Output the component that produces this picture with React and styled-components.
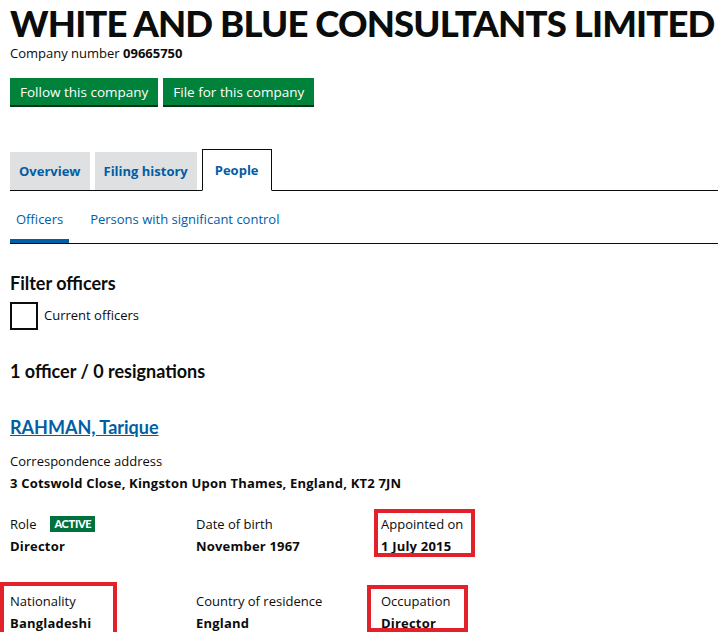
import React from "react";
import styled, { createGlobalStyle } from "styled-components";

const GlobalStyle = createGlobalStyle`
  body {
    margin: 0;
    background: #ffffff;
    font-family: "Open Sans", Arial, sans-serif;
    color: #0b0c0c;
  }
`;

const Page = styled.div`
  padding: 0 0 0 10px;
  width: 708px;
`;

const Title = styled.h1`
  margin: 0;
  padding-top: 3px;
  font-family: "Lato", Arial, sans-serif;
  font-size: 36.5px;
  line-height: 40px;
  font-weight: 900;
  white-space: nowrap;
  letter-spacing: -0.85px;
`;

const CompanyNumber = styled.p`
  margin: 2px 0 0;
  font-size: 13px;
  line-height: 16px;

  strong {
    font-weight: 700;
  }
`;

const ButtonRow = styled.div`
  display: flex;
  gap: 5px;
  margin-top: 17px;
`;

const GreenButton = styled.button`
  background: #00823b;
  color: #ffffff;
  border: none;
  box-shadow: 0 2px 0 #003618;
  font-family: inherit;
  font-size: 13.5px;
  height: 27px;
  padding: 0 10px;
  cursor: pointer;
`;

const Tabs = styled.ul`
  list-style: none;
  display: flex;
  gap: 5px;
  margin: 44px 0 0;
  padding: 0;
  border-bottom: 1px solid #0b0c0c;
  height: 41px;
  align-items: flex-end;
`;

const Tab = styled.li`
  height: ${props => (props.$active ? "42px" : "38px")};
  margin-bottom: ${props => (props.$active ? "-1px" : "0")};
  box-sizing: border-box;
  display: flex;
  align-items: center;
  padding: 0 ${props => (props.$active ? "12px" : "9px")};
  background: ${props => (props.$active ? "#ffffff" : "#dee0e2")};
  border: ${props => (props.$active ? "1px solid #0b0c0c" : "none")};
  border-bottom: ${props => (props.$active ? "1px solid #ffffff" : "none")};
  color: #005ea5;
  font-weight: 700;
  font-size: 13px;
`;

const SubTabs = styled.div`
  display: flex;
  gap: 15px;
  border-bottom: 1px solid #0b0c0c;
  margin-top: 19px;
`;

const SubTab = styled.span`
  font-size: 13px;
  color: #005ea5;
  padding: 0 6px 11px;
  border-bottom: 4px solid ${props => (props.$active ? "#005ea5" : "transparent")};
`;

const SectionHeading = styled.h2`
  margin: ${props => props.$top || "0"} 0 0;
  font-family: "Lato", Arial, sans-serif;
  font-size: 18px;
  line-height: 22px;
  font-weight: 700;
`;

const CheckRow = styled.label`
  display: flex;
  align-items: flex-start;
  gap: 6px;
  margin-top: 8px;
  font-size: 13px;
`;

const CheckBox = styled.span`
  width: 28px;
  height: 28px;
  box-sizing: border-box;
  border: 2px solid #0b0c0c;
  background: #ffffff;
`;

const CheckText = styled.span`
  padding-top: 4px;
`;

const OfficerLink = styled.a`
  display: inline-block;
  margin-top: 34px;
  font-family: "Lato", Arial, sans-serif;
  font-size: 18px;
  font-weight: 700;
  color: #005ea5;
  text-decoration: underline;
`;

const Label = styled.div`
  font-size: 13px;
  line-height: 18px;
`;

const Value = styled.div`
  font-size: 13px;
  line-height: 18px;
  font-weight: 700;
  letter-spacing: 0.2px;
  margin-top: 4px;
`;

const Address = styled.div`
  margin-top: 13px;
`;

const DetailGrid = styled.div`
  display: grid;
  grid-template-columns: 186px 185px 186px;
  row-gap: 37px;
  margin-top: 23px;
`;

const Detail = styled.div`
  position: relative;

  &::after {
    content: "";
    display: ${props => (props.$box ? "block" : "none")};
    position: absolute;
    left: ${props => (props.$box ? props.$box[0] : 0)}px;
    top: ${props => (props.$box ? props.$box[1] : 0)}px;
    width: ${props => (props.$box ? props.$box[2] : 0)}px;
    height: ${props => (props.$box ? props.$box[3] : 0)}px;
    border: 4px solid #e3212b;
    box-sizing: border-box;
    pointer-events: none;
  }
`;

const Tag = styled.span`
  display: inline-block;
  margin-left: 14px;
  background: #00703c;
  color: #ffffff;
  font-family: "Lato", Arial, sans-serif;
  font-size: 11px;
  font-weight: 900;
  letter-spacing: -0.3px;
  line-height: 16px;
  padding: 0 4px;
  vertical-align: 1px;
`;

const details = [
  { label: "Role", value: "Director", tag: "ACTIVE" },
  { label: "Date of birth", value: "November 1967" },
  { label: "Appointed on", value: "1 July 2015", box: [-7, -6, 101, 48] },
  { label: "Nationality", value: "Bangladeshi", box: [-10, -10, 117, 60] },
  { label: "Country of residence", value: "England" },
  { label: "Occupation", value: "Director", box: [-14, -7, 101, 47] },
];

export default function App() {
  return (
    <Page>
      <GlobalStyle />
      <Title>WHITE AND BLUE CONSULTANTS LIMITED</Title>
      <CompanyNumber>
        Company number <strong>09665750</strong>
      </CompanyNumber>
      <ButtonRow>
        <GreenButton>Follow this company</GreenButton>
        <GreenButton>File for this company</GreenButton>
      </ButtonRow>

      <Tabs>
        <Tab>Overview</Tab>
        <Tab>Filing history</Tab>
        <Tab $active>People</Tab>
      </Tabs>

      <SubTabs>
        <SubTab $active>Officers</SubTab>
        <SubTab>Persons with significant control</SubTab>
      </SubTabs>

      <SectionHeading $top="28px">Filter officers</SectionHeading>
      <CheckRow>
        <CheckBox />
        <CheckText>Current officers</CheckText>
      </CheckRow>

      <SectionHeading $top="30px">1 officer / 0 resignations</SectionHeading>

      <OfficerLink href="#">RAHMAN, Tarique</OfficerLink>

      <Address>
        <Label>Correspondence address</Label>
        <Value>3 Cotswold Close, Kingston Upon Thames, England, KT2 7JN</Value>
      </Address>

      <DetailGrid>
        {details.map(d => (
          <Detail key={d.label} $box={d.box}>
            <Label>
              {d.label}
              {d.tag && <Tag>{d.tag}</Tag>}
            </Label>
            <Value>{d.value}</Value>
          </Detail>
        ))}
      </DetailGrid>
    </Page>
  );
}
